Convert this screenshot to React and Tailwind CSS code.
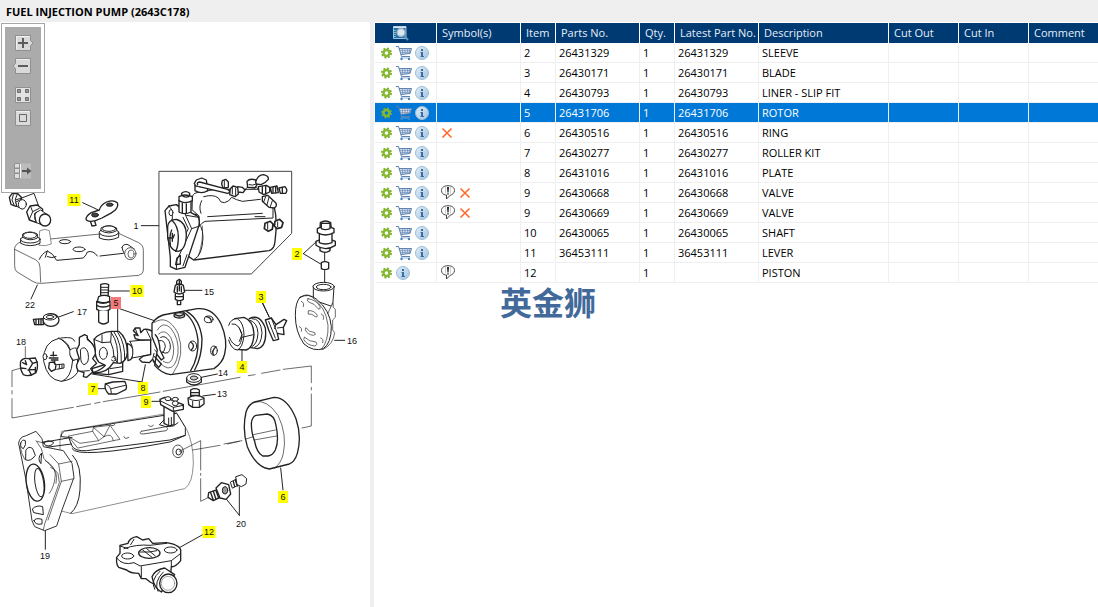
const columns = [
  { label: "Symbol(s)", width: "w-[84px]" },
  { label: "Item", width: "w-[35px]" },
  { label: "Parts No.", width: "w-[84px]" },
  { label: "Qty.", width: "w-[35px]" },
  { label: "Latest Part No.", width: "w-[84px]" },
  { label: "Description", width: "w-[130px]" },
  { label: "Cut Out", width: "w-[70px]" },
  { label: "Cut In", width: "w-[70px]" },
  { label: "Comment", width: "" },
];

const parts = [
  { item: 2, no: "26431329", name: "SLEEVE" },
  { item: 3, no: "26430171", name: "BLADE" },
  { item: 4, no: "26430793", name: "LINER - SLIP FIT" },
  { item: 5, no: "26431706", name: "ROTOR", selected: true },
  { item: 6, no: "26430516", name: "RING", cross: true },
  { item: 7, no: "26430277", name: "ROLLER KIT" },
  { item: 8, no: "26431016", name: "PLATE" },
  { item: 9, no: "26430668", name: "VALVE", note: true, cross: true },
  { item: 9, no: "26430669", name: "VALVE", note: true, cross: true },
  { item: 10, no: "26430065", name: "SHAFT" },
  { item: 11, no: "36453111", name: "LEVER" },
  { item: 12, no: "", name: "PISTON", note: true },
];

// x / y are the centre of each callout number
const callouts = [
  { n: 1, x: 136, y: 226 },
  { n: 22, x: 30, y: 305 },
  { n: 17, x: 82, y: 312 },
  { n: 15, x: 209, y: 292 },
  { n: 16, x: 352, y: 341 },
  { n: 18, x: 21, y: 342 },
  { n: 14, x: 223, y: 373 },
  { n: 13, x: 222, y: 394 },
  { n: 20, x: 241, y: 524 },
  { n: 19, x: 45, y: 556 },
  { n: 11, x: 74, y: 200, fill: "#ffff00" },
  { n: 10, x: 137, y: 291, fill: "#ffff00" },
  { n: 5, x: 116, y: 303, fill: "#f47a7a" },
  { n: 2, x: 297, y: 254, fill: "#ffff00" },
  { n: 3, x: 261, y: 297, fill: "#ffff00" },
  { n: 4, x: 242, y: 367, fill: "#ffff00" },
  { n: 7, x: 93, y: 389, fill: "#ffff00" },
  { n: 8, x: 143, y: 388, fill: "#ffff00" },
  { n: 9, x: 146, y: 402, fill: "#ffff00" },
  { n: 6, x: 283, y: 497, fill: "#ffff00" },
  { n: 12, x: 209, y: 532, fill: "#ffff00" },
];

function GearIcon() {
  return (
    <svg width="13" height="14" viewBox="0 0 13 14">
      <circle cx="6.5" cy="7" r="4.6" fill="none" stroke="#78ad2a" strokeWidth="1.8" strokeDasharray="1.9 1.7" />
      <circle cx="6.5" cy="7" r="3" fill="none" stroke="#86b92f" strokeWidth="2.4" />
    </svg>
  );
}

function CartIcon() {
  return (
    <svg width="16" height="16" viewBox="0 0 16 16" fill="none">
      <path d="M3 3.500H15.500L14 8.500L5 9.500Z" fill="#d3dfed" />
      <path d="M0 1.500H2.500L5.500 11.500H14" stroke="#5a82b3" />
      <path d="M3 3.500H15.500L14 8.500L5 9.500" stroke="#5d80ad" />
      <path d="M3.500 5.500H15M4.200 7.500H14.500M6.500 3.500V9M9 3.500V9M11.500 3.500V9M13.500 3.500V8.500" stroke="#7593bb" strokeWidth="0.7" />
      <path d="M6 11.500L5 13H13.500" stroke="#8ba8ca" strokeWidth="0.8" />
      <circle cx="5.5" cy="14" r="1.200" fill="#3c86c6" />
      <circle cx="13" cy="14" r="1.200" fill="#3c86c6" />
    </svg>
  );
}

function InfoIcon() {
  return (
    <svg width="14" height="14" viewBox="0 0 14 14">
      <defs>
        <linearGradient id="infoBg" x1="0" y1="0" x2="1" y2="1">
          <stop offset="0" stopColor="#e4eff8" />
          <stop offset="1" stopColor="#9fc3de" />
        </linearGradient>
      </defs>
      <circle cx="7" cy="7" r="6.5" fill="url(#infoBg)" stroke="#9dbdd8" />
      <path d="M6 3H8V5H6ZM5.500 6H8V10H9V11H5.500V10H6V7H5.500Z" fill="#3c6ca6" />
    </svg>
  );
}

function NoteIcon() {
  return (
    <svg width="14" height="16" viewBox="0 0 14 16" fill="none">
      <path d="M4.500 10C2 9.500 .5 8 .5 5.500C.5 2.500 3 .7 7 .7C11 .7 13.500 2.500 13.500 5.500C13.500 8 11 10 9.500 10L5.500 14V10Z" fill="#fff" stroke="#444" />
      <path d="M6 2H8L7.600 7.500H6.400Z" fill="#222" />
      <path d="M6.200 8.200H7.800V9.600H6.200Z" fill="#222" />
      <path d="M4.500 2V8.500M9.500 2V8.500" stroke="#aaa" strokeWidth="0.6" />
    </svg>
  );
}

function CrossIcon() {
  return (
    <svg width="12" height="12" viewBox="0 0 12 12" fill="none" stroke="#ff6a2b" strokeWidth="1.6">
      <path d="M1.500 1.500L10.500 10.500M10.500 1.500L1.500 10.500" />
    </svg>
  );
}

function SearchDocIcon() {
  return (
    <svg width="16" height="16" viewBox="0 0 16 16" fill="none">
      <path d="M.5 1.500H13V13.500H.5Z" fill="#1f6fab" stroke="#9bc3e0" />
      <path d="M.5 1.500H13V3H.5Z" fill="#d6e8f5" />
      <path d="M2 5V12.500" stroke="#cfe3f2" strokeWidth="1.2" strokeDasharray="1 1" />
      <circle cx="8" cy="7.500" r="4" fill="#dbe6ef" stroke="#9fb1c2" strokeWidth="1.4" />
      <path d="M11 10.500L15 15" stroke="#5d93c0" strokeWidth="2" />
    </svg>
  );
}

function ToolButton({ label, className = "", children }) {
  return (
    <button type="button" aria-label={label} className={`block size-4 ${className}`}>
      <svg width="16" height="16" viewBox="0 0 16 16" fill="none" className="overflow-visible">
        {children}
      </svg>
    </button>
  );
}

function ZoomToolbar() {
  return (
    <div className="absolute left-px top-px border border-[#a6a6a6] bg-white p-[3px]">
      <div className="flex w-9 flex-col bg-[#ababab] px-2.5 pb-2.5 pt-2">
        <ToolButton label="Zoom in">
          <path d="M.5.5H15.500V5.500L18 8L15.500 10.500V15.500H.5Z" fill="#d9d9d9" stroke="#8f8f8f" />
          <path d="M1.500 1.500H14.500M1.500 1.500V14" stroke="#f1f1f1" />
          <path d="M8 3V13M3 8H13" stroke="#5c5c5c" strokeWidth="2" />
        </ToolButton>
        <ToolButton label="Zoom out" className="mt-[7px]">
          <path d="M.5.5H15.500V15.500H.5V10.500L-2 8L.5 5.500Z" fill="#d9d9d9" stroke="#8f8f8f" />
          <path d="M1.500 1.500H14.500" stroke="#f1f1f1" />
          <path d="M3 8H13" stroke="#5c5c5c" strokeWidth="2" />
        </ToolButton>
        <ToolButton label="Tile view" className="mt-[13px]">
          <path d="M.5.5H15.500V15.500H.5Z" fill="#e2e2e2" stroke="#8f8f8f" />
          <path d="M2.500 2.500H5.500V5.500H2.500ZM10.500 2.500H13.500V5.500H10.500ZM2.500 10.500H5.500V13.500H2.500ZM10.500 10.500H13.500V13.500H10.500Z" fill="#999" stroke="#6b6b6b" />
        </ToolButton>
        <ToolButton label="Fit to window" className="mt-[7px]">
          <path d="M.5.5H15.500V15.500H.5Z" fill="#dadada" stroke="#8f8f8f" />
          <path d="M1.500 1.500H14.500" stroke="#f1f1f1" />
          <path d="M4.500 4.500H11.500V11.500H4.500Z" stroke="#666" />
        </ToolButton>
        <ToolButton label="Hide drawing" className="mt-[37px]">
          <path d="M5 .5H16V15.500H5Z" fill="#bcbcbc" />
          <path d="M-.5.5H4.500V5H-.5ZM-.5 5.500H4.500V10H-.5ZM-.5 10.500H4.500V15.500H-.5Z" fill="#dedede" stroke="#909090" />
          <path d="M5.500 1V15" stroke="#f4f4f4" />
          <path d="M7 8H14" stroke="#555" strokeWidth="2" />
          <path d="M12 4.500L16.500 8L12 11.500Z" fill="#555" />
        </ToolButton>
      </div>
    </div>
  );
}

function PumpDrawing() {
  return (
    <svg viewBox="0 22 370 585" className="block w-full" role="img" aria-label="Fuel injection pump, exploded view">
      <g fill="#fff" stroke="#222" strokeWidth="3" strokeLinecap="round" strokeLinejoin="round">
        {/* cover, bolts, lever and shaft */}
        <g transform="translate(0 160) scale(0.33333)">
          <path d="M65 114L102 100L116 138" fill="none" />
          <path d="M28 112L36 101L52 100L64 112L62 130L48 139L33 133Z" strokeWidth="4" />
          <path d="M40 104L36 120L42 134M52 102L46 118L50 136M46 120L66 114M50 138L66 147" fill="none" />
          <path d="M48 126L62 119L80 130L66 146L52 140Z" />
          <ellipse cx="67" cy="133" rx="12" ry="14" />
          <path d="M80 156L90 138L112 135L128 148L126 172L110 188L88 180Z" strokeWidth="4" />
          <path d="M92 140L98 155L88 178M98 155L118 145" fill="none" />
          <path d="M104 160L122 150L142 164L132 197L110 188Z" />
          <ellipse cx="135" cy="180" rx="17" ry="18" strokeWidth="4" />
          <path d="M110 156Q98 168 108 186" fill="none" />
          <path d="M268 165L272 186L276 198L288 196L282 178Z" strokeWidth="4" />
          <path d="M258 178Q258 168 274 158L298 150Q302 134 320 126Q340 118 352 128Q356 138 346 150L332 160Q316 168 306 174L286 182Q262 188 258 178Z" strokeWidth="4" />
          <ellipse cx="285" cy="165" rx="10" ry="6" fill="#444" />
          <ellipse cx="329" cy="134" rx="10" ry="5" fill="#444" />
          <path d="M248 128L293 149" fill="none" />
          <path d="M44 264Q46 252 62 246L300 222L356 220L416 248Q431 256 430 272V332Q430 342 416 346L126 370Q108 372 96 363L50 335Q44 330 44 318Z" strokeWidth="2" />
          <path d="M44 268L108 300Q120 306 120 322L122 366" fill="none" strokeWidth="2" />
          <path d="M118 298Q126 280 142 273Q158 278 170 301L250 294Q260 284 262 276Q280 270 292 288M300 288L370 280M142 273L136 292M142 290Q156 296 168 290" fill="none" strokeWidth="3" />
          <path d="M120 212Q134 204 148 212L154 252Q136 260 118 256Z" strokeWidth="2" stroke="#555" />
          <path d="M62 236V250Q90 264 120 250V236" strokeWidth="3" />
          <ellipse cx="91" cy="238" rx="29" ry="11" />
          <path d="M68 232V222Q90 210 112 222V234Q90 246 68 232Z" />
          <ellipse cx="90" cy="226" rx="20" ry="9" />
          <path d="M298 218V234Q326 246 356 232V216" />
          <ellipse cx="327" cy="217" rx="29" ry="12" />
          <path d="M303 212V204Q326 190 350 204V212Q326 226 303 212Z" />
          <ellipse cx="327" cy="206" rx="20" ry="8" />
          <ellipse cx="195" cy="245" rx="17" ry="6" />
          <ellipse cx="237" cy="268" rx="18" ry="7" />
          <path d="M366 262Q370 250 384 254L404 268M366 262Q368 274 374 282" fill="none" />
          <ellipse cx="391" cy="281" rx="17" ry="18" stroke="#555" />
          <ellipse cx="393" cy="282" rx="9" ry="12" stroke="#666" />
          <path d="M112 375L93 417M388 393H324M220 455L176 471M424 197H478" fill="none" />
          <path d="M302 374Q314 368 326 374L324 412H302Z" strokeWidth="4" />
          <path d="M302 382H325M302 390H325M302 398H325M302 406H325" strokeWidth="3" />
          <path d="M296 410Q312 402 329 410V424Q312 432 292 424Z" strokeWidth="4" />
          <path d="M290 424Q308 436 330 424V448Q310 460 290 448Z" strokeWidth="4" />
          <path d="M290 436Q308 446 330 436M296 452V486Q310 498 325 486V452" strokeWidth="4" />
          <path d="M100 478L130 476V494L104 494Z" strokeWidth="4" />
          <path d="M108 478V494M116 478V494M123 478V494" strokeWidth="4" />
          <ellipse cx="153" cy="480" rx="24" ry="19" strokeWidth="4" />
          <ellipse cx="150" cy="471" rx="20" ry="9" />
          <ellipse cx="150" cy="471" rx="11" ry="5" />
        </g>

        {/* complete pump in its frame */}
        <g transform="translate(155 170) scale(0.33333)">
          <path d="M13 4H410V190L289 312H13Z" stroke="#444" />
          <path d="M112 134L358 112Q368 150 360 214Q358 238 342 242L116 270L96 256Z" strokeWidth="4" />
          <path d="M118 154Q144 160 144 204Q142 256 118 268" fill="none" strokeWidth="3" />
          <path d="M142 168Q146 214 130 258" fill="none" strokeWidth="2" />
          <path d="M112 84Q112 70 126 68L182 58H310Q336 70 346 92L354 112V144L150 154Q138 160 134 168L132 138L112 120Z" strokeWidth="3" />
          <path d="M146 80Q176 72 190 84Q196 100 208 98Q222 96 230 82Q244 90 262 94L316 88M158 140L322 130M300 140H330M140 92Q130 110 138 130" fill="none" strokeWidth="3" />
          <path d="M120 46V62Q140 74 158 62V48" strokeWidth="4" />
          <path d="M118 40L124 30L140 24L154 30L156 44L140 50L122 48Z" strokeWidth="4" />
          <path d="M128 44Q124 38 134 36L218 58Q230 66 218 70L132 50" strokeWidth="4" />
          <path d="M202 32L212 28L220 36V52L204 54L200 42ZM226 56L234 48L248 52L250 72L240 80L224 74ZM248 50L262 52L270 60L264 68L250 66M276 34Q284 24 302 30L306 44L300 54L278 52Z" strokeWidth="4" />
          <path d="M232 52V72M242 54V76M208 32V50M282 44Q292 48 304 42M270 60L276 52H304L316 62" strokeWidth="3" fill="none" />
          <path d="M302 36Q308 14 326 14Q342 18 340 28Q330 40 318 44L304 42Z" strokeWidth="4" />
          <path d="M310 50L334 46L344 52V66L326 74L312 66ZM346 52L366 48L370 68L350 70ZM372 54L390 50Q400 60 392 70L376 70Z" strokeWidth="4" />
          <path d="M322 50V70M332 48V70M354 52V68M362 50V68M382 52V70" strokeWidth="4" />
          <path d="M322 80L338 76L362 98Q368 108 358 114L342 112L322 94Z" strokeWidth="4" />
          <path d="M332 80L326 96M342 82L336 104M352 92L346 110" strokeWidth="3" />
          <path d="M330 160L346 154L354 162L352 178L340 184L328 176ZM360 154L374 148L384 158L380 172L366 176L358 168Z" strokeWidth="5" />
          <path d="M338 160V178M354 164H360M368 156V170" strokeWidth="3" />
          <path d="M30 122L42 108L64 104L130 140Q134 150 132 166L90 292L64 298L46 290V262Z" strokeWidth="4" />
          <path d="M64 104L94 136L130 142M92 136L110 176L134 168M110 176L66 270L64 296M84 142L100 176L70 236M42 108L52 122V148M96 254L84 288" strokeWidth="3" fill="none" />
          <path d="M38 170Q40 148 64 148Q94 156 94 196Q92 240 70 244Q44 244 38 200Z" strokeWidth="4" />
          <path d="M50 150Q70 168 70 200Q70 230 62 244M50 180Q42 196 46 224M38 204H54L58 194M52 190V214M66 264L76 256V282L62 284Z" strokeWidth="4" fill="none" />
          <ellipse cx="48" cy="128" rx="6" ry="9" />
          <path d="M72 92V126Q88 136 108 126V92Z" strokeWidth="4" />
          <path d="M72 80Q88 70 112 80V92Q90 104 72 92ZM80 76V70Q92 60 104 70V78Q92 86 80 76Z" strokeWidth="4" />
          <path d="M82 100V128M94 102V128" strokeWidth="4" />
        </g>

        {/* sleeve, spray valve and end plate */}
        <g transform="translate(150 160) scale(0.33333)">
          <path d="M80 364L88 358L94 364V374H80ZM76 376Q88 368 100 376L104 396Q88 408 72 396ZM76 402V418Q88 426 100 418V402M82 424V434H92V424" strokeWidth="4" />
          <path d="M88 362V392M82 380V396M94 380V396M78 410H98" strokeWidth="4" />
          <path d="M106 391H156M336 427L357 470M554 541H584M524 276V304M524 332V378M460 281L498 246M460 281L512 312" fill="none" />
          <path d="M511 188Q526 178 542 188L544 206H510Z" strokeWidth="4" />
          <path d="M510 262V272Q526 282 540 272V262Z" strokeWidth="4" />
          <path d="M498 244Q526 228 556 244V256Q526 276 498 256Z" strokeWidth="4" />
          <path d="M508 220H546V248Q526 256 508 248Z" strokeWidth="4" />
          <path d="M502 206Q526 192 552 206V218Q526 232 502 218Z" strokeWidth="4" />
          <path d="M514 190H540V206Q526 212 514 206Z" strokeWidth="4" />
          <path d="M514 308Q524 302 536 308V326Q524 332 514 326Z" strokeWidth="4" />
          <path d="M490 378V420L548 440L552 380" />
          <ellipse cx="521" cy="380" rx="32" ry="13" />
          <ellipse cx="521" cy="381" rx="22" ry="8" />
          <path d="M548 430L550 442L556 448V472L548 480V510L554 518Q550 552 520 568L490 560Z" strokeWidth="2" />
          <path d="M450 412Q476 398 500 418Q540 450 544 500Q544 550 520 566Q490 576 462 552Q436 516 436 466Q436 426 450 412Z" strokeWidth="3" />
          <path d="M450 412Q470 398 484 410Q528 440 534 496Q536 544 514 568" fill="none" strokeWidth="2" />
          <path d="M474 416Q500 420 510 440Q512 450 504 446Q494 430 476 426Q468 420 474 416ZM476 452Q492 450 502 466Q502 474 496 470Q486 460 476 462ZM468 504Q476 516 494 518Q500 524 490 526Q472 524 466 510ZM464 532Q478 546 498 546Q504 556 494 558Q472 556 462 540ZM454 424Q464 428 460 440M514 462Q524 466 520 478M448 500Q458 504 454 514M512 534Q522 536 518 548" strokeWidth="2" />
        </g>

        {/* centre lines and the left bearing */}
        <g transform="translate(0 320) scale(0.33333)">
          <path d="M76 80V112M60 145L36 152V200M36 212V222M36 236V294L220 262M230 260L272 252M284 250L300 247M310 245L480 216M490 214L720 172M745 167L765 164M785 160L840 150M850 148L934 138V188M934 202V210M934 222V318L906 324" fill="none" strokeWidth="2" />
          <path d="M62 124Q70 112 84 116L106 114Q118 134 108 158Q88 172 70 164Q58 146 62 124Z" strokeWidth="4" />
          <path d="M88 116L98 130L86 150L94 164M68 128L80 134L76 122M62 144L78 146M98 130L112 126M106 142V156M84 150L106 148" strokeWidth="4" fill="none" />
          <path d="M316 192L338 186L374 184Q382 198 378 208L350 222H326Q312 208 316 192Z" strokeWidth="4" />
          <path d="M316 192Q334 196 334 220M334 206L376 196M292 206H314" fill="none" />
        </g>

        {/* hub, plates, rotor, hydraulic head and liner */}
        <g transform="translate(40 300) scale(0.33333)">
          <path d="M55 116L98 114L112 140L116 206L84 234L62 244Z" strokeWidth="0" />
          <path d="M56 115Q88 110 98 116L104 124M64 244Q98 240 112 218Q120 200 112 178" fill="none" />
          <path d="M56 115Q92 122 98 180Q94 236 64 244Q22 240 11 184Q8 126 56 115Z" />
          <path d="M66 120Q82 130 90 150L108 144M90 150Q86 168 98 182L116 176" fill="none" />
          <path d="M104 144L118 150V176L100 180Q86 164 90 150Z" strokeWidth="2" />
          <ellipse cx="15" cy="170" rx="6" ry="9" />
          <path d="M40 156V168M32 166H50M28 174H54M34 180H54M44 184V192M28 188L40 186L48 194L46 208L34 214L26 204Z" strokeWidth="4" fill="none" />
          <path d="M50 194L72 192V204L50 208M58 194V206M66 194V204" fill="none" />
          <path d="M220 186L248 186V214L206 224L160 220L156 206Z" strokeWidth="4" />
          <path d="M210 206L248 200M206 206V222" strokeWidth="3" />
          <path d="M118 112L134 104L142 108V118Q164 132 168 160L158 176L170 190L152 206L158 216L140 232L130 230L132 218L114 212Q108 200 110 194L118 176Q112 160 110 150L118 134Z" strokeWidth="4" />
          <path d="M122 148Q136 134 144 158Q150 190 132 194Q122 190 122 172Z" />
          <path d="M140 112L158 132M120 214L148 212" fill="none" />
          <path d="M162 118Q180 96 214 94H236Q262 114 262 158Q260 184 240 190L220 188Q200 222 158 218Q184 210 196 196L176 186Q164 170 166 150Z" strokeWidth="4" />
          <path d="M162 118L186 128L212 126L214 96M186 128V104M212 126Q222 146 222 172L232 188M214 98Q238 130 232 188M222 96Q246 130 244 188M234 98Q256 130 254 180M216 172Q228 162 228 180Q220 188 214 180" fill="none" strokeWidth="3" />
          <ellipse cx="190" cy="160" rx="12" ry="18" />
          <path d="M262 130Q280 136 280 158Q278 180 264 182Z" strokeWidth="4" />
          <path d="M270 124L332 118V164L276 174Q284 148 270 124Z" strokeWidth="3" />
          <path d="M280 92L286 84H300L302 98L312 88Q330 86 344 100L354 108V120Q366 148 360 156L372 182L364 202L350 196L338 178L328 188L306 186L298 178L310 168L332 164V120L300 120L286 116L282 104L294 106Z" strokeWidth="4" />
          <path d="M286 86L294 108M320 92L334 120M344 150L370 176M338 178L342 160" fill="none" />
          {/* hydraulic head */}
          <path d="M336 70Q352 46 384 42L472 26Q520 22 544 74Q564 120 554 162Q548 188 522 206L392 224Q364 220 344 196L352 150L336 110Z" strokeWidth="4" />
          <path d="M430 36Q466 58 474 120Q476 174 452 212M440 34Q480 58 486 116Q486 170 464 210" fill="none" strokeWidth="4" />
          <path d="M342 68Q382 40 414 100Q438 166 398 222" fill="none" strokeWidth="2" />
          <path d="M352 90Q368 62 392 84Q418 116 414 160Q408 204 384 204Q368 200 362 190M356 102Q374 84 392 112Q408 146 396 178Q388 196 370 184" fill="none" strokeWidth="2" />
          <path d="M362 112Q376 104 388 124Q396 146 384 158Q376 162 366 156M358 122Q374 118 376 140Q374 156 364 160" fill="none" strokeWidth="3" />
          <path d="M346 104Q358 116 360 150L372 174L364 180L350 162M344 170L364 192L356 202L340 184" strokeWidth="4" fill="none" />
          <ellipse cx="418" cy="46" rx="16" ry="8" fill="#ddd" strokeWidth="4" />
          <path d="M406 44Q418 52 430 44" fill="none" strokeWidth="4" />
          <ellipse cx="506" cy="58" rx="13" ry="10" />
          <path d="M498 50Q514 52 514 66" fill="none" strokeWidth="4" />
          <ellipse cx="458" cy="138" rx="12" ry="15" />
          <path d="M452 126Q468 136 454 150" fill="none" strokeWidth="4" />
          <ellipse cx="522" cy="152" rx="10" ry="14" />
          <path d="M528 140Q514 152 520 164" fill="none" strokeWidth="4" />
          <path d="M233 24V96M233 24L343 62M156 222L306 246L316 194" fill="none" strokeWidth="3" />
          {/* liner 4 */}
          <path d="M628 56Q660 40 676 84Q682 140 652 146L628 142" strokeWidth="4" />
          <path d="M636 56Q662 54 666 98Q664 136 644 142M628 60Q652 66 654 100Q652 132 636 140" fill="none" />
          <path d="M584 56L612 52Q640 62 642 102Q640 144 618 150L586 148" strokeWidth="4" />
          <path d="M566 76Q572 56 592 56Q612 68 612 106Q608 144 592 150Q574 148 566 120" />
          <path d="M576 72Q596 68 606 104Q604 134 594 138Q576 134 568 112M606 112L640 104M598 84L606 104L598 124" fill="none" />
          <path d="M606 150V186M666 4L688 52" fill="none" />
          <path d="M676 60L694 54L708 74L732 58L740 62L730 82L732 104L712 100L716 118L700 122L686 90Z" strokeWidth="4" />
          <path d="M686 64L706 114M694 54L712 100M708 74L704 86M730 82L712 84" fill="none" strokeWidth="3" />
        </g>

        {/* housing 19 and piston 12 */}
        <g transform="translate(0 390) scale(0.33333)">
          <path d="M186 124L528 66L560 118Q580 160 580 220Q578 282 554 296L216 371L180 362V150Z" stroke="#555" strokeWidth="2" />
          <path d="M186 130Q192 120 204 122L530 70L556 112V136L510 150L260 182Q224 184 216 168L206 142L184 140Z" />
          <path d="M218 196Q246 224 240 300Q236 350 212 370M216 176Q228 208 510 156L556 136" fill="none" strokeWidth="3" />
          <path d="M206 138L278 124L280 112L330 106L360 148L234 174ZM206 140L240 160L296 152L278 124M280 112L312 140L296 152M312 140Q336 126 340 152M312 140L330 106" fill="none" strokeWidth="2" />
          <path d="M424 124L498 110Q508 116 498 122L430 132Q414 132 424 124Z" strokeWidth="3" stroke="#555" />
          <path d="M330 102Q334 112 344 104M446 106Q450 114 460 106M372 140Q374 150 386 142" fill="none" stroke="#555" />
          <path d="M124 158L216 142M124 174L214 162M132 156Q144 148 160 156Q160 166 144 168Q130 166 132 156Z" />
          <path d="M56 158Q60 140 76 138L108 124L126 146L130 170L190 182L216 220L222 262L186 360L170 408L134 422L104 410L96 392L78 270Z" strokeWidth="3" stroke="#333" />
          <path d="M108 152L124 176L132 206L174 250L178 278L134 402L130 420M150 194L176 222L216 214M176 222L184 274L222 266M184 274L144 390M60 168Q64 192 74 208M112 154L134 160" fill="none" strokeWidth="2" />
          <path d="M62 160Q66 146 76 152Q80 164 70 176Q60 172 62 160ZM78 180Q86 166 98 176L106 196Q92 216 78 210ZM102 392Q106 382 126 388V402Q106 406 102 392ZM98 356Q110 344 128 350L130 374L102 368ZM124 190Q110 206 122 220Z" strokeWidth="3" />
          <ellipse cx="106" cy="278" rx="27" ry="56" transform="rotate(-8 106 278)" strokeWidth="4" />
          <ellipse cx="118" cy="278" rx="13" ry="43" transform="rotate(-8 118 278)" />
          <path d="M136 212Q164 226 166 252Q164 290 148 310M152 232Q176 240 168 280" fill="none" strokeWidth="2" />
          <ellipse cx="534" cy="184" rx="16" ry="19" stroke="#555" />
          <ellipse cx="536" cy="186" rx="8" ry="9" />
          <path d="M538 184L602 152V240M602 250V256M602 266V334L622 324M578 180L660 166M672 162L726 152" fill="none" strokeWidth="2" />
          <path d="M136 422V478M540 472L608 434" fill="none" />
          {/* valve 9 */}
          <path d="M456 34H482" />
          <path d="M492 50H522V104L508 108L492 100Z" strokeWidth="4" />
          <path d="M506 84V106M514 82V104M492 90L478 104Q496 114 520 108L534 98" strokeWidth="3" fill="none" />
          <path d="M480 28L494 22L550 44V58L518 64L482 44Z" strokeWidth="4" />
          <path d="M480 32L520 52L550 46M520 52V62" strokeWidth="3" fill="none" />
          <ellipse cx="504" cy="26" rx="9" ry="6" />
          <ellipse cx="526" cy="28" rx="9" ry="6" />
          <ellipse cx="526" cy="40" rx="9" ry="7" />
          {/* piston body */}
          <path d="M360 490V466L384 460Q388 444 410 440L428 450L446 446L458 460L500 458Q546 466 542 486V512Q526 532 514 530L510 572Q480 596 450 576L438 566H424L416 550Q390 550 380 540L356 532Q348 524 350 502Z" strokeWidth="4" />
          <path d="M350 504Q368 528 402 518L420 528L514 512L540 492M372 476Q410 462 450 466L500 460M424 530V562M514 512V530M360 468L384 476M392 464L402 448" fill="none" strokeWidth="3" />
          <ellipse cx="383" cy="498" rx="18" ry="9" />
          <ellipse cx="512" cy="480" rx="19" ry="9" />
          <ellipse cx="448" cy="489" rx="32" ry="16" strokeWidth="4" />
          <path d="M428 480L456 502M440 476L466 498M420 486H448L470 482" strokeWidth="3" fill="none" />
          <path d="M456 560Q464 540 494 534L524 554L484 606Q462 594 456 560Z" strokeWidth="4" />
          <path d="M464 598Q450 570 480 544M474 604Q460 576 490 546" strokeWidth="3" fill="none" />
          <ellipse cx="505" cy="580" rx="26" ry="28" strokeWidth="4" />
          <ellipse cx="504" cy="580" rx="20" ry="21" stroke="#777" strokeWidth="2" />
        </g>

        {/* washer, plug, cam ring and banjo bolt */}
        <g transform="translate(150 340) scale(0.33333)">
          <path d="M154 112L202 102M158 168L196 163M392 384L399 450M268 526L228 476M268 526V440" fill="none" />
          <path d="M110 114V126Q132 144 154 126V114" strokeWidth="4" />
          <ellipse cx="132" cy="114" rx="22" ry="13" />
          <ellipse cx="132" cy="114" rx="11" ry="6" fill="#ccc" />
          <path d="M122 150Q134 142 148 150V172H122Z" strokeWidth="4" />
          <path d="M122 158H148M122 166H148" strokeWidth="4" />
          <path d="M114 174Q138 160 162 174V192L148 202H128L116 194Z" strokeWidth="4" />
          <path d="M116 176Q138 188 160 176M128 184V202M148 184V200" strokeWidth="3" fill="none" />
          <path d="M314 186L372 172Q412 172 438 236Q456 290 442 340Q434 366 418 372L358 387Q318 382 292 320Q276 270 288 216Q296 192 314 186Z" strokeWidth="4" />
          <path d="M314 186Q350 176 384 226Q412 284 400 340Q394 370 374 384" fill="none" strokeWidth="2" />
          <path d="M304 250Q306 230 318 226L352 222Q374 226 378 256Q388 304 376 330Q368 346 354 348L338 348Q320 338 314 304Q304 280 304 250Z" strokeWidth="4" />
          <path d="M310 284L376 270M312 300L380 288M288 297L310 290M232 312L268 304" strokeWidth="2" fill="none" />
          <path d="M176 458L204 448L214 470L190 482L174 472Z" strokeWidth="4" />
          <path d="M182 458L190 480M190 454L198 478M198 452L206 474" strokeWidth="4" />
          <path d="M198 444L214 428L236 434L242 462L228 478L210 474Z" strokeWidth="4" />
          <ellipse cx="225" cy="451" rx="8" ry="11" fill="#999" />
          <path d="M242 426L262 416L268 434L248 444Z" />
          <path d="M250 424L254 440M256 420L262 438" strokeWidth="4" />
          <path d="M258 410L276 404L290 416L288 432L274 440L262 434Z" />
        </g>
      </g>

      <g className="font-['Liberation_Sans',Arial,sans-serif] text-[9px]" textAnchor="middle" fill="#111">
        {callouts.map(({ n, x, y, fill }) => {
          const w = n > 9 ? 13 : 10;
          return (
            <g key={n}>
              {fill && <rect x={x - w / 2} y={y - 6} width={w} height="12" fill={fill} />}
              <text x={x} y={y + 3}>{n}</text>
            </g>
          );
        })}
      </g>
    </svg>
  );
}

function PartsTable() {
  return (
    <table className="w-full table-fixed border-separate border-spacing-0 text-left text-[11px] leading-[18px] whitespace-nowrap">
      <thead>
        <tr className="h-5 bg-[#003a73] text-[#e6eef6]">
          <th className="w-[62px] border-r border-white p-0">
            <button type="button" aria-label="Search parts" className="ml-[18px] block">
              <SearchDocIcon />
            </button>
          </th>
          {columns.map((col) => (
            <th key={col.label} className={`${col.width} border-r border-white p-0 pl-[5px] font-normal last:border-r-0`}>
              {col.label}
            </th>
          ))}
        </tr>
      </thead>
      <tbody>
        {parts.map((part, i) => (
          <tr
            key={i}
            className={`h-5 *:border-b *:border-r *:border-[#efefef] *:p-0 *:pl-[3px] *:last:border-r-0 ${
              part.selected ? "bg-[#0078d7] text-white" : "text-black"
            }`}
          >
            <td>
              <div className="flex items-center gap-[3px] pl-0.5">
                <button type="button" aria-label="Options"><GearIcon /></button>
                {part.no && <button type="button" aria-label="Add to cart"><CartIcon /></button>}
                <button type="button" aria-label="Part information"><InfoIcon /></button>
              </div>
            </td>
            <td>
              <div className="flex items-center gap-1 pl-px">
                {part.note && <NoteIcon />}
                {part.cross && <CrossIcon />}
              </div>
            </td>
            <td>{part.item}</td>
            <td>{part.no}</td>
            <td>1</td>
            <td>{part.no}</td>
            <td>{part.name}</td>
            <td />
            <td />
            <td />
          </tr>
        ))}
      </tbody>
    </table>
  );
}

export default function App() {
  return (
    <div className="flex min-h-screen flex-col bg-[#efefef] font-['Open_Sans','Noto_Sans',sans-serif] text-black">
      <h1 className="h-[22px] pl-1.5 pt-0.5 text-[11px] leading-5 font-bold">FUEL INJECTION PUMP (2643C178)</h1>
      <main className="flex flex-1">
        <section className="relative w-[370px] shrink-0 bg-white">
          <PumpDrawing />
          <ZoomToolbar />
        </section>
        <section className="ml-1 min-w-0 flex-1 bg-white pl-px pt-px">
          <PartsTable />
          <p className="pl-[125px] font-['Noto_Sans_CJK_SC',sans-serif] text-[32px] leading-9 font-bold text-[#41699a]">
            英金狮
          </p>
        </section>
      </main>
    </div>
  );
}
